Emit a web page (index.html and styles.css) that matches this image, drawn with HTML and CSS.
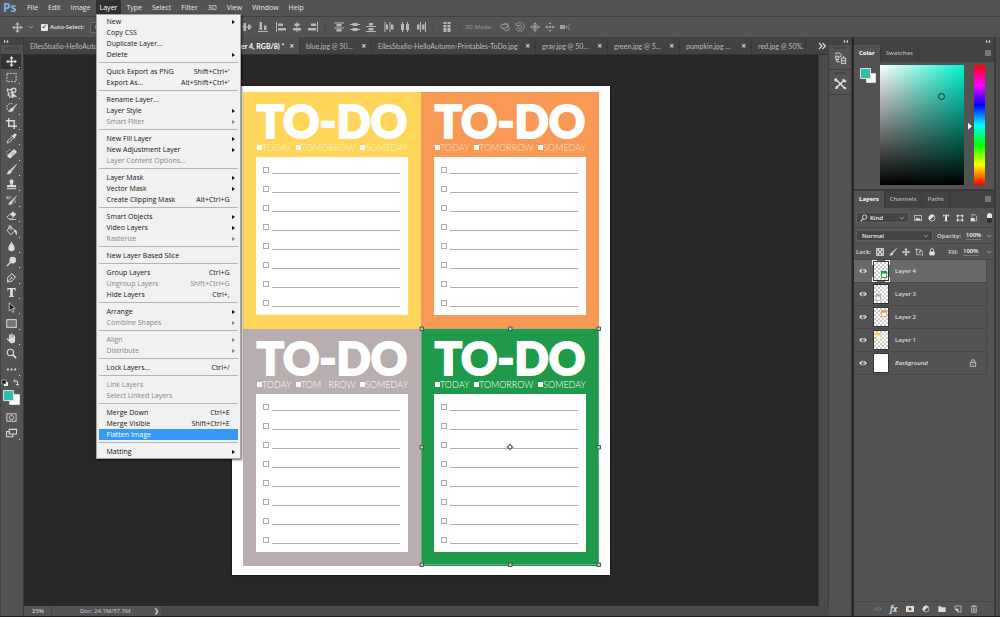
FILE: index.html
```html
<!DOCTYPE html>
<html lang="en">
<head>
<meta charset="utf-8">
<title>Photoshop</title>
<link rel="stylesheet" href="styles.css">
</head>
<body>
<svg class="sprite" aria-hidden="true">
  <symbol id="move" viewBox="0 0 12 12"><path d="M6 0l2.3 2.6H6.8v2.6h2.6V3.7L12 6 9.400 8.300V6.800H6.800v2.600h1.500L6 12 3.700 9.400h1.500V6.800H2.600v1.500L0 6l2.600-2.300v1.500h2.600V2.600H3.700z" fill="currentColor"/></symbol>
  <symbol id="marquee" viewBox="0 0 12 12"><rect x="1" y="1.500" width="10" height="9" fill="none" stroke="currentColor" stroke-dasharray="2 1.200"/></symbol>
  <symbol id="lasso" viewBox="0 0 12 12"><path d="M1 2l3.500 1.500L7.500 1.200M3 7.500L1 2M3.500 7.500C1.500 8 2 9.500 3.500 9.500S5 11 3.500 11.500" fill="none" stroke="currentColor" stroke-width="1.200"/><circle cx="8.500" cy="3.500" r="2.300" fill="none" stroke="currentColor" stroke-width="1.300"/><path d="M3.500 7.500L7 5M6 5.500l5.500 5H8.500L6.500 12z" fill="currentColor" stroke="currentColor" stroke-width=".7"/></symbol>
  <symbol id="quick" viewBox="0 0 12 12"><path d="M7 2C4 1 1 2.500 1 6s2 4.500 5 4.500" fill="none" stroke="currentColor" stroke-dasharray="2 1"/><path d="M12 2L7 6.500l1 1.300zM6.500 6.500C4.500 6.500 5 9 3 9.800c2.500 1 5.300.3 5-2z" fill="currentColor" stroke="currentColor" stroke-width=".5"/></symbol>
  <symbol id="crop" viewBox="0 0 12 12"><path d="M0 3h9v9M3 0v9h9" fill="none" stroke="currentColor" stroke-width="1.500"/></symbol>
  <symbol id="dropper" viewBox="0 0 12 12"><path d="M7 3.500L1.800 8.700 1.200 11l2.200-.7L8.600 5" fill="none" stroke="currentColor"/><path d="M6 3l3.200 3.200.9-.9-.6-.7L11.400 2.700C12 1 10.800 0 9.300.6L7.500 2.600l-.7-.5z" fill="currentColor"/></symbol>
  <symbol id="heal" viewBox="0 0 12 12"><path d="M5 1.500a4 4 0 0 0-4 5" fill="none" stroke="currentColor" stroke-dasharray="1 1"/><rect x="1" y="4" width="11" height="4.800" rx="1.500" transform="rotate(-42 6.500 6.400)" fill="currentColor"/><path d="M5.600 6.200l2 2M7.300 4.700l2 2" stroke="#535353" stroke-width=".7"/></symbol>
  <symbol id="brush" viewBox="0 0 12 12"><path d="M11.500.5L5.200 6l1.200 1.300zM4.700 6.600C2.500 6.500 3 9.500.8 10.500c2.500 1 5.300 0 5.100-2.600z" fill="currentColor" stroke="currentColor" stroke-width=".6"/></symbol>
  <symbol id="stamp" viewBox="0 0 12 12"><path d="M6 .5a2.200 2.200 0 0 0-1.700 3.700L5 6.500H2C1 6.500 1 7 1 9h10c0-2 0-2.500-1-2.500H7l.7-2.300A2.200 2.200 0 0 0 6 .500zM1 10h10v1.200H1z" fill="currentColor"/></symbol>
  <symbol id="history" viewBox="0 0 12 12"><path d="M11.500 1L6.200 6l1.200 1.300zM5.700 6.600C4 6.500 4.500 9 2.500 10c2.300 1 4.700 0 4.400-2.400z" fill="currentColor" stroke="currentColor" stroke-width=".5"/><path d="M1 3.500C3 1 5 2 6.500 3.500M1 1v3h3M9 9c1-1 1.500-2 1-3" fill="none" stroke="currentColor" stroke-width=".8"/></symbol>
  <symbol id="eraser" viewBox="0 0 12 12"><path d="M4.200 4.500L7.500 1.500l3.800 3.200L8 8z" fill="currentColor"/><path d="M4.200 4.500L1 7.800 3.600 10H6l2.400-2.300M3.600 10.300H11" fill="none" stroke="currentColor" stroke-width=".9"/></symbol>
  <symbol id="bucket" viewBox="0 0 12 12"><path d="M1 5.500L5.500 2 10 6.500 5 10.500zM3 4.500V2C3 0 5.500 0 5.500 2v4" fill="none" stroke="currentColor"/><path d="M9.500 5c2.800 1 2.800 3 2.300 6-1.800-.5-1.800-3-2.300-6z" fill="currentColor"/></symbol>
  <symbol id="drop" viewBox="0 0 12 12"><path d="M6 .5C5 3 2.500 5 2.500 7.700a3.500 3.500 0 0 0 7 0C9.500 5 7 3 6 .500z" fill="currentColor"/></symbol>
  <symbol id="dodge" viewBox="0 0 12 12"><circle cx="7.300" cy="4.500" r="3.600" fill="currentColor"/><path d="M4.800 7L1 11" stroke="currentColor" stroke-width="1.500"/></symbol>
  <symbol id="pen" viewBox="0 0 12 12"><path d="M1.500 11L2 5.500 6.500 2l3.600 3.700L6.500 10zM1.500 11l4-4M6 1.300l5 5" fill="none" stroke="currentColor"/><circle cx="6" cy="6.200" r="1" fill="currentColor"/></symbol>
  <symbol id="type" viewBox="0 0 12 12"><path d="M1.500 1h9v3h-.8c-.2-1.400-.6-1.900-2.200-1.900v7.300c0 .7.300.9 1.300.9v.7H3.200v-.7c1 0 1.300-.2 1.300-.9V2.100C2.900 2.100 2.500 2.600 2.300 4h-.8z" fill="currentColor"/></symbol>
  <symbol id="select" viewBox="0 0 12 12"><path d="M3.500.8v9l2.200-2 1.500 3.400 1.500-.7-1.500-3.300h2.900z" fill="#161616" stroke="currentColor" stroke-width=".9"/></symbol>
  <symbol id="rect" viewBox="0 0 12 12"><rect x=".8" y="1.800" width="10.400" height="8.400" fill="#777" stroke="currentColor"/></symbol>
  <symbol id="hand" viewBox="0 0 12 12"><path d="M4 6V2.300M5.700 5.500V1.300M7.500 5.500V1.700M9.200 6V3" stroke="currentColor" stroke-width="1.300" stroke-linecap="round"/><path d="M3.300 5h6.600v3c0 1.800-1 3.300-3.200 3.300-2 0-2.700-.8-3.600-2.200L.8 6.500c0-.9 1-1 2.500.7z" fill="currentColor"/></symbol>
  <symbol id="zoomer" viewBox="0 0 12 12"><circle cx="4.800" cy="4.800" r="3.400" fill="none" stroke="currentColor" stroke-width="1.200"/><path d="M7.300 7.300L11 11" stroke="currentColor" stroke-width="1.800"/></symbol>
  <symbol id="dots" viewBox="0 0 12 12"><path d="M1 5h2v2H1zM5 5h2v2H5zM9 5h2v2H9z" fill="currentColor"/></symbol>
  <symbol id="mask" viewBox="0 0 12 12"><rect x="1" y="2" width="10" height="8" fill="none" stroke="currentColor"/><circle cx="6" cy="6" r="2.300" fill="none" stroke="currentColor"/></symbol>
  <symbol id="screen" viewBox="0 0 12 12"><path d="M3.500 1.500h8v5h-8zM3 4H.500v5.500h7V7" fill="none" stroke="currentColor" stroke-width="1.200"/></symbol>
  <symbol id="chev" viewBox="0 0 8 8"><path d="M1 2.500l3 3 3-3" fill="none" stroke="currentColor"/></symbol>
  <symbol id="twin" viewBox="0 0 8 6"><path d="M1 1l2.200 2L1 5zM4.500 1l2.200 2-2.200 2z" fill="currentColor"/></symbol>
  <symbol id="more" viewBox="0 0 8 8"><path d="M1 1l3 3-3 3M4.500 1l3 3-3 3" fill="none" stroke="currentColor" stroke-width="1.200"/></symbol>
  <symbol id="al-mid" viewBox="0 0 10 10"><path d="M0 4.500h10v1H0zM1.500 1h2.500v8H1.500zM6 2.500h2.500v5H6z" fill="currentColor"/></symbol>
  <symbol id="al-bot" viewBox="0 0 10 10"><path d="M0 9h10v1H0zM1.500 0h2.500v8H1.500zM6 3.500h2.500V8H6z" fill="currentColor"/></symbol>
  <symbol id="al-left" viewBox="0 0 10 10"><path d="M0 0h1v10H0zM2 1.500h5V4H2zM2 6h8v2.500H2z" fill="currentColor"/></symbol>
  <symbol id="al-cen" viewBox="0 0 10 10"><path d="M4.500 0h1v10h-1zM2.500 1.500h5V4h-5zM1 6h8v2.500H1z" fill="currentColor"/></symbol>
  <symbol id="al-right" viewBox="0 0 10 10"><path d="M9 0h1v10H9zM3 1.500h5V4H3zM0 6h8v2.500H0z" fill="currentColor"/></symbol>
  <symbol id="d-top" viewBox="0 0 10 10"><path d="M0 .5h10v1H0zM2.500 2h5v2.500h-5zM0 5.500h10v1H0zM2.500 7h5v2.500h-5z" fill="currentColor"/></symbol>
  <symbol id="d-mid" viewBox="0 0 10 10"><path d="M0 2h10v1H0zM2.500 1h5v3h-5zM0 7h10v1H0zM2.500 6h5v3h-5z" fill="currentColor"/></symbol>
  <symbol id="d-bot" viewBox="0 0 10 10"><path d="M0 4h10v1H0zM3 1h4v2.500H3zM0 9h10v1H0zM2.500 6h5v2.500h-5z" fill="currentColor"/></symbol>
  <symbol id="d-left" viewBox="0 0 10 10"><path d="M.5 0h1v10h-1zM2 2.500h2v5H2zM5.500 0h1v10h-1zM7 2.500h2.500v5H7z" fill="currentColor"/></symbol>
  <symbol id="d-cen" viewBox="0 0 10 10"><path d="M2 0h1v10H2zM1 2h3v6H1zM7 0h1v10H7zM6 2h3v6H6z" fill="currentColor"/></symbol>
  <symbol id="d-right" viewBox="0 0 10 10"><path d="M4 0h1v10H4zM1 2.500h2.500v5H1zM9 0h1v10H9zM6 2.500h2.500v5H6z" fill="currentColor"/></symbol>
  <symbol id="d-auto" viewBox="0 0 10 10"><path d="M1.500 0h3v2h-3zM5.500 0h3v2h-3zM1.500 3h3v7h-3zM5.500 3h3v7h-3z" fill="currentColor"/><path d="M1 5.500h8" stroke="#535353" stroke-width=".6"/></symbol>
  <symbol id="m-orbit" viewBox="0 0 12 12"><ellipse cx="5" cy="5" rx="4.500" ry="2.500" fill="none" stroke="currentColor"/><path d="M4 7c0 4 6 4 7.500 1.500 0-3-3-3-4.500-2M4 4a3 3 0 0 1 6 1" fill="none" stroke="currentColor"/></symbol>
  <symbol id="m-roll" viewBox="0 0 12 12"><path d="M2.500 2A5.200 5.200 0 1 1 1 7M1 1v3h3" fill="none" stroke="currentColor"/><circle cx="6" cy="6" r="2.200" fill="none" stroke="currentColor"/></symbol>
  <symbol id="m-pan" viewBox="0 0 12 12"><path d="M6 0l2.500 3h-5zM6 12l2.500-3h-5zM0 6l3-2.500v5zM12 6L9 3.500v5zM4 4h4v4H4z" fill="currentColor"/></symbol>
  <symbol id="m-slide" viewBox="0 0 12 12"><path d="M6 0l2 2.500H4zM6 12l2-2.500H4zM0 6l3-2v1.500h1.500v1H3V8zM12 6L9 4v1.500H7.500v1H9V8zM5 4.500h2v3H5z" fill="currentColor"/></symbol>
  <symbol id="m-cam" viewBox="0 0 12 12"><path d="M0 3.500h6v5H0zM6.500 6L8.500 4v4z" fill="currentColor"/><path d="M12 2L9.500 6 12 10" fill="none" stroke="currentColor" stroke-width=".8"/></symbol>
  <symbol id="ham" viewBox="0 0 6 6"><path d="M0 .500h6v1H0zM0 2.500h6v1H0zM0 4.500h6v1H0z" fill="currentColor"/></symbol>
  <symbol id="hist-p" viewBox="0 0 14 14"><path d="M1 2c3-1.500 5.500-1.500 6.500.5S7 5.500 5.500 5.500 4 8 5.500 8.500M1.500 4.500h4M2 4.500v3.500h3M3 8v2.500h3M8 6.500h4.500v6H8zM10.200 4.500v2M8 9.500h4.500" fill="none" stroke="currentColor"/></symbol>
  <symbol id="tools-p" viewBox="0 0 14 14"><path d="M2.500 3L11 11.500M11.500 3L3 11" stroke="currentColor" stroke-width="1.600"/><path d="M0 2.500L3 1v3.500l-2 .5zM10 1.500l1 2 2.500.3-1 2-2.500-.5-1.300-2zM1 12.500l1.500-3 2.500 2-2 1.500zM10 10l3.500 1.500-1 2-2.500-1z" fill="currentColor"/></symbol>
  <symbol id="eye" viewBox="0 0 12 12"><path d="M.5 6C3 1.500 9 1.500 11.500 6 9 10.500 3 10.500.500 6z" fill="currentColor"/><circle cx="6" cy="6" r="2.500" fill="#444"/><circle cx="6" cy="5.600" r="1" fill="currentColor"/></symbol>
  <symbol id="pic" viewBox="0 0 12 12"><rect x="1" y="2" width="10" height="8" fill="none" stroke="currentColor"/><path d="M2 9l2.500-4 2 2.500L8 6l2 3z" fill="currentColor"/></symbol>
  <symbol id="adj" viewBox="0 0 12 12"><circle cx="6" cy="6" r="4.500" fill="none" stroke="currentColor"/><path d="M2.500 9.500A4.800 4.800 0 0 1 9.500 2.500z" fill="currentColor"/></symbol>
  <symbol id="shape" viewBox="0 0 12 12"><path d="M2.500 2.500h7v7h-7z" fill="none" stroke="currentColor"/><path d="M1 1h3v3H1zM8 1h3v3H8zM1 8h3v3H1zM8 8h3v3H8z" fill="currentColor"/></symbol>
  <symbol id="smart" viewBox="0 0 12 12"><path d="M3 5V1h4.500L10 3.500V10H7" fill="none" stroke="currentColor"/><path d="M1 6h6v5H1z" fill="currentColor"/></symbol>
  <symbol id="checker" viewBox="0 0 12 12"><rect x="1" y="1" width="10" height="10" fill="none" stroke="currentColor" stroke-width="1.500"/><path d="M2 2h3v3H2zM7 2h3v3H7zM4.500 4.500h3v3h-3zM2 7h3v3H2zM7 7h3v3H7z" fill="currentColor"/></symbol>
  <symbol id="artb" viewBox="0 0 12 12"><path d="M0 2.500h8.500L11 5v7M2.500 0v10h7" fill="none" stroke="currentColor"/><path d="M5 7l4-4 1 1-4 4z" fill="currentColor"/></symbol>
  <symbol id="lock" viewBox="0 0 12 12"><path d="M3.500 6V3.500a2.500 2.500 0 0 1 5 0V6" fill="none" stroke="currentColor" stroke-width="1.200"/><path d="M2 5.300h8V11H2z" fill="currentColor"/></symbol>
  <symbol id="lock-o" viewBox="0 0 12 12"><path d="M3.500 5V3.500a2.500 2.500 0 0 1 5 0V5M2 5h8v6H2zM6 7v2" fill="none" stroke="currentColor" stroke-width="1.200"/></symbol>
  <symbol id="link" viewBox="0 0 12 12"><path d="M5 4H3.500a2 2 0 0 0 0 4H5M7 4h1.500a2 2 0 0 1 0 4H7M4 6h4" fill="none" stroke="currentColor"/></symbol>
  <symbol id="addmask" viewBox="0 0 12 12"><path fill-rule="evenodd" d="M0 1.500h12v9H0zM6 3.700a2.300 2.300 0 1 0 0 4.600 2.300 2.300 0 0 0 0-4.600z" fill="currentColor"/></symbol>
  <symbol id="folder" viewBox="0 0 12 12"><path d="M.5 2h4l1 1.500h6v7H.500z" fill="currentColor"/></symbol>
  <symbol id="newl" viewBox="0 0 12 12"><path d="M1.500 1.500h9v9H6.500l-5-5z" fill="none" stroke="currentColor"/><path d="M1 5.500h5.500V11z" fill="currentColor"/></symbol>
  <symbol id="trash" viewBox="0 0 12 12"><path d="M1 2.500h10M4.500 2V.800h3V2M2.500 4v7h7V4M4.800 4v6M7.200 4v6" fill="none" stroke="currentColor"/></symbol>
  <symbol id="search" viewBox="0 0 12 12"><circle cx="7" cy="4.500" r="3.300" fill="none" stroke="currentColor" stroke-width="1.300"/><path d="M4.700 7L1 11" stroke="currentColor" stroke-width="1.600"/></symbol>
</svg>

<div class="app">
  <nav class="menubar" aria-label="Application menu">
    <span class="logo">Ps</span>
    <button>File</button><button>Edit</button><button>Image</button>
    <div class="open">
      <button class="current" aria-expanded="true">Layer</button>
      <div class="dropdown">
        <button class="sub">New</button><button>Copy CSS</button><button>Duplicate Layer...</button><button class="sub">Delete</button>
        <hr>
        <button>Quick Export as PNG<kbd>Shift+Ctrl+'</kbd></button><button>Export As...<kbd>Alt+Shift+Ctrl+'</kbd></button>
        <hr>
        <button>Rename Layer...</button><button class="sub">Layer Style</button><button class="sub" disabled>Smart Filter</button>
        <hr>
        <button class="sub">New Fill Layer</button><button class="sub">New Adjustment Layer</button><button disabled>Layer Content Options...</button>
        <hr>
        <button class="sub">Layer Mask</button><button class="sub">Vector Mask</button><button>Create Clipping Mask<kbd>Alt+Ctrl+G</kbd></button>
        <hr>
        <button class="sub">Smart Objects</button><button class="sub">Video Layers</button><button class="sub" disabled>Rasterize</button>
        <hr>
        <button>New Layer Based Slice</button>
        <hr>
        <button>Group Layers<kbd>Ctrl+G</kbd></button><button disabled>Ungroup Layers<kbd>Shift+Ctrl+G</kbd></button><button>Hide Layers<kbd>Ctrl+,</kbd></button>
        <hr>
        <button class="sub">Arrange</button><button class="sub" disabled>Combine Shapes</button>
        <hr>
        <button class="sub" disabled>Align</button><button class="sub" disabled>Distribute</button>
        <hr>
        <button>Lock Layers...<kbd>Ctrl+/</kbd></button>
        <hr>
        <button disabled>Link Layers</button><button disabled>Select Linked Layers</button>
        <hr>
        <button>Merge Down<kbd>Ctrl+E</kbd></button><button>Merge Visible<kbd>Shift+Ctrl+E</kbd></button><button class="hot">Flatten Image</button>
        <hr>
        <button class="sub">Matting</button>
      </div>
    </div>
    <button>Type</button><button>Select</button><button>Filter</button><button>3D</button><button>View</button><button>Window</button><button>Help</button>
  </nav>

  <div class="options">
    <div class="opt-left">
      <svg class="i12"><use href="#move"/></svg>
      <svg class="i6"><use href="#chev"/></svg>
      <label class="auto"><input type="checkbox" checked>Auto-Select:</label>
      <select class="group-pick" aria-label="Auto-select target"><option>Layer</option></select>
    </div>
    <div class="opt-group"><svg><use href="#al-mid"/></svg><svg><use href="#al-bot"/></svg></div>
    <div class="opt-group"><svg><use href="#al-left"/></svg><svg><use href="#al-cen"/></svg><svg><use href="#al-right"/></svg></div>
    <div class="opt-group ruled"><svg><use href="#d-top"/></svg><svg><use href="#d-mid"/></svg><svg><use href="#d-bot"/></svg></div>
    <div class="opt-group"><svg><use href="#d-left"/></svg><svg><use href="#d-cen"/></svg><svg><use href="#d-right"/></svg></div>
    <div class="opt-group ruled"><svg><use href="#d-auto"/></svg></div>
    <div class="opt-group ruled tight"><span class="mode">3D Mode:</span></div>
    <div class="opt-group dim"><svg><use href="#m-orbit"/></svg><svg><use href="#m-roll"/></svg><svg><use href="#m-pan"/></svg><svg><use href="#m-slide"/></svg><svg><use href="#m-cam"/></svg></div>
  </div>

  <div class="main">
    <aside class="toolbar">
      <div class="strip-head start"><svg><use href="#twin"/></svg></div>
      <div class="grip"></div>
      <div class="tools">
        <button class="on" aria-label="Move"><svg><use href="#move"/></svg></button>
        <button aria-label="Marquee"><svg><use href="#marquee"/></svg></button>
        <button aria-label="Lasso"><svg><use href="#lasso"/></svg></button>
        <button aria-label="Quick selection"><svg><use href="#quick"/></svg></button>
        <button aria-label="Crop"><svg><use href="#crop"/></svg></button>
        <button aria-label="Eyedropper"><svg><use href="#dropper"/></svg></button>
        <button aria-label="Healing brush"><svg><use href="#heal"/></svg></button>
        <button aria-label="Brush"><svg><use href="#brush"/></svg></button>
        <button aria-label="Clone stamp"><svg><use href="#stamp"/></svg></button>
        <button aria-label="History brush"><svg><use href="#history"/></svg></button>
        <button aria-label="Eraser"><svg><use href="#eraser"/></svg></button>
        <button aria-label="Paint bucket"><svg><use href="#bucket"/></svg></button>
        <button aria-label="Blur"><svg><use href="#drop"/></svg></button>
        <button aria-label="Dodge"><svg><use href="#dodge"/></svg></button>
        <button aria-label="Pen"><svg><use href="#pen"/></svg></button>
        <button aria-label="Type"><svg><use href="#type"/></svg></button>
        <button aria-label="Path selection"><svg><use href="#select"/></svg></button>
        <button aria-label="Rectangle"><svg><use href="#rect"/></svg></button>
        <button aria-label="Hand"><svg><use href="#hand"/></svg></button>
        <button class="plain" aria-label="Zoom"><svg><use href="#zoomer"/></svg></button>
        <button aria-label="More tools"><svg><use href="#dots"/></svg></button>
      </div>
      <svg class="swatches" viewBox="0 0 23 30">
        <path d="M4 5h4v4H4z" fill="#eee"/><path d="M2 3h4v4H2z" fill="#111" stroke="#ddd" stroke-width=".6"/>
        <path d="M14 4h3.500v4M15 2.500L13.500 4 15 5.500M16 7l1.500 1.500L19 7" fill="none" stroke="#ddd" stroke-width=".9"/>
        <path d="M9 17h11v11H9z" fill="#fff" stroke="#666" stroke-width=".5"/>
        <path d="M3.500 13.500h10v10h-10z" fill="#2fbcaa" stroke="#ddd"/>
      </svg>
      <div class="modes">
        <button class="plain" aria-label="Quick mask"><svg><use href="#mask"/></svg></button>
        <button aria-label="Screen mode"><svg><use href="#screen"/></svg></button>
      </div>
    </aside>

    <section class="doc">
      <div class="tabs">
        <div class="tab wide1"><span>EllesStudio-HelloAutumn.jpg</span></div>
        <div class="tab wide2 active"><span>50% (Layer 4, RGB/8) *</span><button aria-label="Close">×</button></div>
        <div class="tab"><span>blue.jpg @ 50...</span><button aria-label="Close">×</button></div>
        <div class="tab wide3"><span>EllesStudio-HelloAutumn-Printables-ToDo.jpg</span><button aria-label="Close">×</button></div>
        <div class="tab"><span>gray.jpg @ 50...</span><button aria-label="Close">×</button></div>
        <div class="tab"><span>green.jpg @ 5...</span><button aria-label="Close">×</button></div>
        <div class="tab"><span>pumpkin.jpg ...</span><button aria-label="Close">×</button></div>
        <div class="tab last"><span>red.jpg @ 50%.</span></div>
        <button class="more" aria-label="More documents"><svg><use href="#more"/></svg></button>
      </div>
      <div class="view">
        <div class="canvas">
          <div class="page">
            <article class="card yellow">
              <h2>TO-DO</h2>
              <p class="when"><span>TODAY</span><span>TOMORROW</span><span>SOMEDAY</span></p>
              <ul class="sheet"><li></li><li></li><li></li><li></li><li></li><li></li><li></li><li></li></ul>
            </article>
            <article class="card orange">
              <h2>TO-DO</h2>
              <p class="when"><span>TODAY</span><span>TOMORROW</span><span>SOMEDAY</span></p>
              <ul class="sheet"><li></li><li></li><li></li><li></li><li></li><li></li><li></li><li></li></ul>
            </article>
            <article class="card gray">
              <h2>TO-DO</h2>
              <p class="when"><span>TODAY</span><span>TOM&nbsp;&nbsp;&nbsp;RROW</span><span>SOMEDAY</span></p>
              <ul class="sheet"><li></li><li></li><li></li><li></li><li></li><li></li><li></li><li></li></ul>
            </article>
            <article class="card green">
              <h2>TO-DO</h2>
              <p class="when"><span>TODAY</span><span>TOMORROW</span><span>SOMEDAY</span></p>
              <ul class="sheet"><li></li><li></li><li></li><li></li><li></li><li></li><li></li><li></li></ul>
              <svg class="bounds" viewBox="0 0 184 243">
                <path d="M3.500 2.500h177v236H3.500z" fill="none" stroke="#8fb79a" stroke-width=".6"/>
                <g fill="#b9cfbd" stroke="#3b4a40" stroke-width=".9">
                  <path d="M2 1h3.500v3.500H2zM90.500 1H94v3.500h-3.500zM179 1h3.500v3.500H179zM2 119.500h3.500v3.500H2zM179 119.500h3.500v3.500H179zM2 237h3.500v3.500H2zM90.500 237H94v3.500h-3.500zM179 237h3.500v3.500H179z"/>
                </g>
                <path d="M92 117.500v7M88.500 121h7" stroke="#444" stroke-width=".9"/>
                <circle cx="92" cy="121" r="2" fill="#fff" stroke="#333" stroke-width=".9"/>
              </svg>
            </article>
          </div>
        </div>
        <div class="scroll"></div>
      </div>
      <footer class="status"><span class="pct">25%</span><span class="size">Doc: 24.1M/57.3M</span><span class="next">❯</span></footer>
    </section>

    <aside class="dock">
      <div class="strip-head back"><svg><use href="#twin"/></svg></div>
      <button aria-label="History"><i class="nub"></i><svg><use href="#hist-p"/></svg></button>
      <button aria-label="Tool presets"><i class="nub"></i><svg><use href="#tools-p"/></svg></button>
    </aside>

    <aside class="panels">
      <div class="strip-head"><svg><use href="#twin"/></svg></div>
      <section class="panel">
        <div class="ptabs"><button class="on">Color</button><button>Swatches</button><svg class="ham"><use href="#ham"/></svg></div>
        <div class="color">
          <svg class="chips" viewBox="0 0 18 18"><path d="M7 6h10v10H7z" fill="#fff" stroke="#666" stroke-width=".5"/><path d="M1.500 1.500h10v10h-10z" fill="#2fbcaa" stroke="#ddd"/></svg>
          <div class="field"><i class="ring"></i></div>
          <input class="hue" type="range" min="0" max="100" value="51" aria-label="Hue">
        </div>
      </section>
      <section class="panel layers">
        <div class="ptabs"><button class="on">Layers</button><button>Channels</button><button>Paths</button><svg class="ham"><use href="#ham"/></svg></div>
        <div class="row filter">
          <span class="pick kind"><svg class="i8"><use href="#search"/></svg><select aria-label="Filter kind"><option>Kind</option></select><svg class="i6"><use href="#chev"/></svg></span>
          <span class="icons"><svg><use href="#pic"/></svg><svg><use href="#adj"/></svg><svg><use href="#type"/></svg><svg><use href="#shape"/></svg><svg><use href="#smart"/></svg></span>
          <i class="toggle"></i>
        </div>
        <div class="row">
          <span class="pick blend"><select aria-label="Blend mode"><option>Normal</option></select><svg class="i6"><use href="#chev"/></svg></span>
          <label class="num">Opacity:<input type="text" value="100%"></label><svg class="i6"><use href="#chev"/></svg>
        </div>
        <div class="row locks">
          <span>Lock:</span>
          <span class="icons"><svg><use href="#checker"/></svg><svg><use href="#brush"/></svg><svg><use href="#move"/></svg><svg><use href="#artb"/></svg><svg><use href="#lock"/></svg></span>
          <label class="num">Fill:<input type="text" value="100%"></label><svg class="i6"><use href="#chev"/></svg>
        </div>
        <ul class="list">
          <li class="sel"><svg class="eye"><use href="#eye"/></svg><span class="thumb"><svg viewBox="0 0 14 18"><path d="M7 9h7v8H7z" fill="#1f9a4a"/><path d="M8 12h5v4H8z" fill="#fff"/></svg></span>Layer 4</li>
          <li><svg class="eye"><use href="#eye"/></svg><span class="thumb"><svg viewBox="0 0 14 18"><path d="M1 9h6v8H1z" fill="#b8adaf"/><path d="M2 12h4v4H2z" fill="#fff"/></svg></span>Layer 3</li>
          <li><svg class="eye"><use href="#eye"/></svg><span class="thumb"><svg viewBox="0 0 14 18"><path d="M7 1h7v8H7z" fill="#f89a55"/><path d="M8 4h5v4H8z" fill="#fff"/></svg></span>Layer 2</li>
          <li><svg class="eye"><use href="#eye"/></svg><span class="thumb"><svg viewBox="0 0 14 18"><path d="M1 1h6v8H1z" fill="#ffd65a"/><path d="M2 4h4v4H2z" fill="#fff"/></svg></span>Layer 1</li>
          <li class="base"><svg class="eye"><use href="#eye"/></svg><span class="thumb solid"></span><em>Background</em><svg class="i8 held"><use href="#lock-o"/></svg></li>
        </ul>
        <footer class="actions">
          <svg class="faint"><use href="#link"/></svg><span class="fx">fx</span><svg><use href="#addmask"/></svg><svg><use href="#adj"/></svg><svg><use href="#folder"/></svg><svg><use href="#newl"/></svg><svg><use href="#trash"/></svg>
        </footer>
      </section>
    </aside>
    <div class="edge"></div>
  </div>
</div>
</body>
</html>
```
FILE: styles.css
```css
*, *::before, *::after { box-sizing: border-box; }

body {
  margin: 0;
  background: #282828;
  color: #dedede;
  font-family: "Open Sans", "Noto Sans", sans-serif;
  font-size: 6px;
  font-weight: 600;
  line-height: 8px;
}

button, input, select {
  margin: 0;
  padding: 0;
  border: 0;
  background: none;
  color: inherit;
  font: inherit;
  appearance: none;
}

svg { display: block; flex: none; }
ul { margin: 0; padding: 0; list-style: none; }
.sprite { position: absolute; width: 0; height: 0; }
.i12 { width: 11px; height: 11px; }
.i8 { width: 8px; height: 8px; }
.i6 { width: 6px; height: 6px; color: #b5b5b5; }

.app { display: flex; flex-direction: column; height: 100vh; border-bottom: 1px solid #241f24; }

/* Application menu */
.menubar {
  display: flex;
  align-items: stretch;
  height: 17px;
  background: #535353;
  border-bottom: 1px solid #404040;
  font-size: 7px;
  font-weight: 500;
}
.menubar > button, .current { height: 16px; padding: 0 5px; }
.menubar > button { color: #e6e6e6; }
.logo {
  width: 22px;
  padding-left: 3px;
  color: #7db2e8;
  font: 700 12px/16px "Open Sans", sans-serif;
}
.open { position: relative; }
.current { padding: 0 4px; background: #303030; color: #fff; }
.dropdown {
  position: absolute;
  z-index: 5;
  top: 14px;
  left: 0;
  display: flex;
  flex-direction: column;
  width: 145px;
  padding: 1px 2px;
  border: 1px solid #a5a5a5;
  background: #f1f1f1;
  box-shadow: 1px 1px 2px rgba(0, 0, 0, .6);
  color: #111;
}
.dropdown button {
  display: flex;
  align-items: center;
  height: 11px;
  padding: 0 8px;
  text-align: left;
  white-space: nowrap;
}
.dropdown button:disabled { color: #858585; }
.dropdown .hot { background: #3399ff; color: #fff; }
.dropdown kbd { margin-left: auto; font: inherit; }
.dropdown .sub { padding-right: 3px; }
.dropdown .sub::after {
  content: "";
  margin-left: auto;
  border: 2px solid transparent;
  border-left: 3px solid currentColor;
  border-right: 0;
}
.dropdown hr { width: 100%; margin: 2px 0 3px; border: 0; border-top: 1px solid #b4b4b4; }

/* Options bar */
.options { display: flex; align-items: center; height: 20px; background: #535353; color: #b8b8b8; }
.opt-left { display: flex; align-items: center; gap: 5px; width: 238px; padding-left: 12px; }
.auto { display: flex; align-items: center; gap: 2px; margin-left: 2px; color: #e6e6e6; }
.auto input {
  display: grid;
  place-items: center;
  width: 7px;
  height: 7px;
  border-radius: 1px;
  background: #e8e8e8;
}
.auto input::before { content: "✓"; color: #222; font: 700 7px/7px "DejaVu Sans", sans-serif; }
.group-pick { width: 100px; height: 11px; padding: 0 4px; border: 1px solid #6a6a6a; background: #454545; }
.opt-group { display: flex; align-items: center; gap: 6px; padding: 0 4px; }
.opt-group svg { width: 10px; height: 10px; }
.opt-group.ruled { margin-left: 3px; padding-left: 8px; }
.opt-group + .ruled { border-left: 1px solid #474747; }
.opt-group.tight { padding-left: 5px; }
.mode { color: #8d8d8d; }
.opt-group.dim { gap: 5px; color: #a0a0a0; }

.main { display: flex; flex: 1; min-height: 0; }
.strip-head {
  display: flex;
  flex: none;
  align-items: center;
  justify-content: flex-end;
  height: 8px;
  padding: 0 2px;
  background: #424242;
  color: #d5d5d5;
}
.strip-head svg { width: 7px; height: 5px; }
.strip-head.start { justify-content: flex-start; }
.strip-head.back svg { transform: scaleX(-1); }

/* Tool strip */
.toolbar { width: 24px; border-right: 1px solid #3a3a3a; border-left: 1px solid #444; background: #535353; }
.grip { height: 3px; margin: 2px 4px 4px; background: #484848; }
.tools { display: grid; grid-auto-rows: 1fr; height: 323px; }
.tools button, .modes button { position: relative; display: grid; place-items: center; width: 20px; color: #dcdcdc; }
.tools svg, .modes svg { width: 11px; height: 11px; }
.tools button::after, .modes button::after {
  content: "";
  position: absolute;
  right: 1px;
  bottom: 1px;
  width: 1px;
  height: 1px;
  background: #ddd;
}
.tools .plain::after, .modes .plain::after { display: none; }
.tools .on { background: #323232; }
.swatches { width: 23px; height: 30px; margin-left: -1px; }
.modes { display: grid; gap: 1px; margin-top: 3px; }
.modes button { height: 15px; }

/* Document window */
.doc { display: flex; flex: 1; flex-direction: column; min-width: 0; }
.tabs {
  display: flex;
  height: 18px;
  border-bottom: 1px solid #333;
  background: #424242;
  font: 400 7px/8px Lato, "Open Sans", sans-serif;
}
.tab {
  display: flex;
  flex: none;
  align-items: center;
  justify-content: space-between;
  width: 72px;
  padding: 0 5px 0 6px;
  border-right: 1px solid #373737;
  color: #bcbcbc;
  overflow: hidden;
  white-space: nowrap;
}
.tab button { color: #ddd; font: 700 8px/8px "Open Sans", sans-serif; }
.wide1 { width: 138px; }
.wide2 { width: 138px; justify-content: flex-end; gap: 5px; }
.wide3 { width: 164px; }
.last { width: 54px; }
.tab.active { background: #505050; color: #fff; font-weight: 700; }
.more { margin-left: auto; padding-right: 3px; color: #ddd; }
.more svg { width: 8px; height: 8px; }
.view { display: flex; flex: 1; min-height: 0; }
.canvas { display: grid; flex: 1; place-items: center; background: #282828; }
.scroll { width: 11px; border-right: 1px solid #3c3c3c; border-left: 1px solid #3c3c3c; background: #4c4c4c; }
.status { display: flex; align-items: center; height: 10px; background: #4a4a4a; color: #d0d0d0; }
.status span { height: 10px; background: #535353; line-height: 10px; }
.pct { width: 28px; padding-left: 8px; border-right: 1px solid #464646; }
.size { width: 95px; padding-left: 28px; font-weight: 400; }
.next { width: 14px; padding-left: 7px; }

/* Printable page */
.page {
  display: grid;
  grid-template-columns: 178px 178px;
  padding: 6px 11px 9px;
  background: #fff;
  box-shadow: 0 0 2px #000;
}
.card { position: relative; height: 237px; padding: 7px 13px 0; color: #fff; }
.yellow { background: #ffd65a; }
.orange { background: #f89a55; }
.gray { background: #b8adaf; }
.green { background: #1f9a4a; }
.card h2 {
  display: flex;
  justify-content: center;
  margin: 0;
  font: 900 45px/44px Lato, sans-serif;
  white-space: nowrap;
  -webkit-text-stroke: 2px #fff;
}
.when {
  display: flex;
  justify-content: space-between;
  margin: 0 0 5px;
  font: 300 9px/9px Lato, sans-serif;
}
.yellow .when { color: #fff3c4; }
.orange .when { color: #ffe0c8; }
.when span { display: flex; align-items: center; }
.when span::before { content: ""; width: 5px; height: 5px; margin-left: 1px; background: #fff; }
.sheet { height: 158px; padding: 3px 8px 0 7px; background: #fff; }
.sheet li { display: flex; align-items: center; height: 19px; }
.sheet li::before { content: ""; width: 6px; height: 6px; border: 1px solid #b3a7a9; }
.sheet li::after { content: ""; flex: 1; height: 8px; margin-left: 3px; border-bottom: 1px solid #b3a7a9; }
.bounds { position: absolute; top: -3px; left: -3px; width: 184px; height: 243px; }

/* Collapsed panels */
.dock { width: 23px; border-right: 1px solid #3c3c3c; background: #535353; }
.dock button { display: grid; justify-items: center; align-content: start; width: 100%; height: 25px; padding-top: 2px; border-bottom: 1px solid #3e3e3e; color: #e4e4e4; }
.nub { width: 12px; height: 2px; margin-bottom: 3px; background: #464646; }
.dock svg { width: 13px; height: 13px; }
.dock .strip-head svg { width: 7px; height: 5px; }

/* Panels */
.panels { display: flex; flex-direction: column; width: 140px; margin-left: 2px; background: #535353; }
.ptabs { display: flex; align-items: stretch; height: 17px; background: #424242; }
.ptabs button { padding: 0 5px 1px; border-right: 1px solid #3a3a3a; color: #b0b0b0; }
.ptabs .on { background: #535353; color: #fff; font-weight: 700; }
.ham { width: 6px; height: 6px; margin: 5px 3px 0 auto; color: #aaa; }
.color { display: flex; height: 129px; padding: 3px 9px 4px 5px; border-bottom: 2px solid #3a3a3a; }
.chips { width: 18px; height: 18px; margin: 2px 3px 0 0; }
.field {
  position: relative;
  flex: 1;
  background: linear-gradient(to top, #000, transparent), linear-gradient(to right, #fff, #00f5cf);
}
.ring { position: absolute; top: 28px; left: 58px; width: 7px; height: 7px; border: 1px solid #10302c; border-radius: 50%; }
.hue {
  width: 17px;
  height: 120px;
  margin-left: 4px;
  writing-mode: vertical-lr;
  background: linear-gradient(#f00, #f0f, #00f, #0ff, #0f0, #ff0, #f00) right / 11px 100% no-repeat;
}
.hue::-webkit-slider-thumb { width: 17px; height: 7px; background: #fff; clip-path: polygon(0 0, 4px 50%, 0 100%); appearance: none; }

.layers { display: flex; flex: 1; flex-direction: column; }
.row { display: flex; align-items: center; height: 16px; padding: 0 2px; border-bottom: 1px solid #474747; }
.row > .i6 { margin-left: auto; }
.filter { height: 20px; }
.pick { display: flex; align-items: center; height: 11px; padding: 0 3px; border: 1px solid #5e5e5e; background: #444; }
.pick select { flex: 1; min-width: 0; padding-left: 2px; color: #f0f0f0; }
.kind { width: 53px; }
.blend { width: 77px; }
.icons { display: flex; gap: 6px; margin-left: 5px; color: #e2e2e2; }
.icons svg { width: 8px; height: 8px; }
.toggle { width: 5px; height: 10px; margin-left: auto; border-radius: 3px; background: linear-gradient(#e8e8e8 50%, #333 50%); }
.num { display: flex; align-items: center; gap: 5px; margin-left: 4px; }
.num input { width: 16px; border-bottom: 1px solid #777; color: #f2f2f2; }
.locks .icons { gap: 5px; margin-left: 5px; }
.locks .num { margin-left: auto; }
.locks > .i6 { margin-left: 7px; }
.list { width: 133px; border-right: 1px solid #484848; }
.list li { display: flex; align-items: center; height: 23px; border-bottom: 1px solid #484848; }
.list .sel { background: #696969; }
.eye { width: 8px; height: 8px; margin: 0 6px 0 5px; color: #e8e8e8; }
.thumb {
  position: relative;
  display: block;
  width: 16px;
  height: 20px;
  margin-right: 6px;
  padding: 1px;
  border: 1px solid #333;
  background: repeating-conic-gradient(#ccc 0 25%, #fff 0 50%) 0 0 / 4px 4px;
}
.thumb svg { width: 100%; height: 100%; }
.sel .thumb::after {
  content: "";
  position: absolute;
  inset: -2px;
  border: 1px solid #f2f2f2;
  mask: linear-gradient(to right, #000 5px, transparent 5px calc(100% - 5px), #000 calc(100% - 5px)),
    linear-gradient(#000 5px, transparent 5px calc(100% - 5px), #000 calc(100% - 5px));
  mask-composite: intersect;
}
.thumb.solid { background: #fff; }
.held { margin: 0 9px 0 auto; color: #d5d5d5; }
.actions { display: flex; align-items: center; gap: 8px; height: 15px; margin-top: auto; padding-left: 20px; border-top: 1px solid #474747; color: #dcdcdc; }
.actions svg { width: 8px; height: 8px; }
.actions .faint { color: #888; }
.fx { width: 8px; font: italic 700 8px/8px "Open Sans", sans-serif; }
.edge { flex: none; width: 6px; margin-left: auto; border-left: 2px solid #3a3a3a; background: #4a4a4a; }
```
